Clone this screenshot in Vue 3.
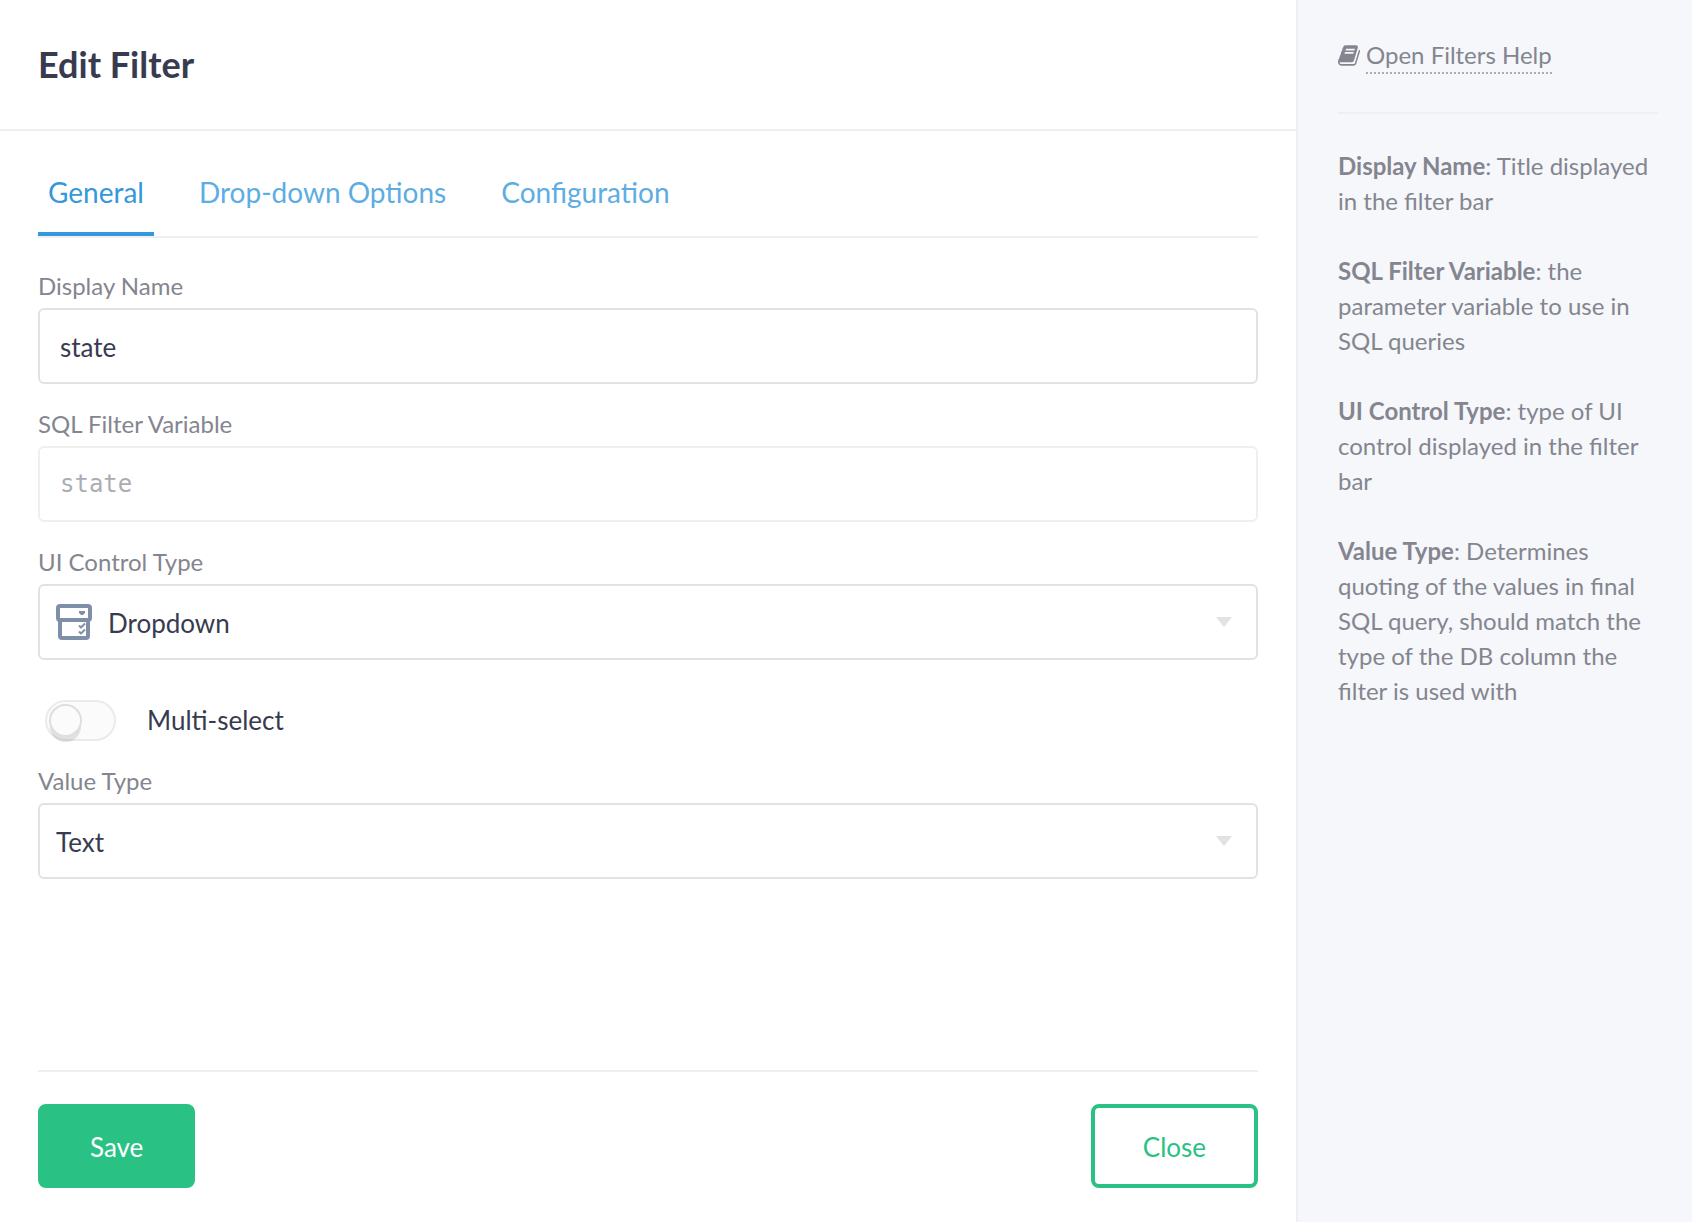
<script setup>
import { ref } from 'vue'

const tabs = ['General', 'Drop-down Options', 'Configuration']
const activeTab = ref('General')
const displayName = ref('state')
const variable = ref('state')
const controlType = ref('Dropdown')
const multiSelect = ref(false)
const valueType = ref('Text')

const help = [
  { term: 'Display Name', text: 'Title displayed in the filter bar' },
  { term: 'SQL Filter Variable', text: 'the parameter variable to use in SQL queries' },
  { term: 'UI Control Type', text: 'type of UI control displayed in the filter bar' },
  {
    term: 'Value Type',
    text: 'Determines quoting of the values in final SQL query, should match the type of the DB column the filter is used with',
  },
]
</script>

<template>
  <div class="dialog">
    <main class="main">
      <header class="header">
        <h1>Edit Filter</h1>
      </header>

      <form class="body" @submit.prevent>
        <nav class="tabs">
          <a
            v-for="tab in tabs"
            :key="tab"
            href="#"
            class="tab"
            :class="{ active: tab === activeTab }"
            @click.prevent="activeTab = tab"
          >{{ tab }}</a>
        </nav>

        <div class="field">
          <label for="display-name">Display Name</label>
          <input id="display-name" v-model="displayName" class="control" type="text" />
        </div>

        <div class="field">
          <label for="variable">SQL Filter Variable</label>
          <input id="variable" v-model="variable" class="control mono" type="text" disabled />
        </div>

        <div class="field">
          <label for="control-type">UI Control Type</label>
          <div class="select-wrap">
            <select id="control-type" v-model="controlType" class="control with-icon">
              <option>Dropdown</option>
            </select>
            <svg class="type-icon" viewBox="0 0 36 36" aria-hidden="true">
              <g fill="none" stroke="#7f8fa9" stroke-linejoin="round">
                <rect x="2" y="2" width="32" height="14" rx="2" stroke-width="4" />
                <path d="M4 16v16a2 2 0 0 0 2 2h24a2 2 0 0 0 2-2V16" stroke-width="4" />
                <path d="M23 21.500l2 2 4-4M23 27.500l2 2 4-4" stroke-width="2" />
              </g>
              <path d="M23 7h6v2l-2 2h-2l-2-2z" fill="#7f8fa9" />
            </svg>
            <svg class="caret" viewBox="0 0 16 10" aria-hidden="true"><path d="M0 0h16L8 10z" fill="#e2e2e2" /></svg>
          </div>
        </div>

        <label class="toggle">
          <input v-model="multiSelect" type="checkbox" />
          <span class="track"><span class="knob"></span></span>
          <span class="toggle-text">Multi-select</span>
        </label>

        <div class="field">
          <label for="value-type">Value Type</label>
          <div class="select-wrap">
            <select id="value-type" v-model="valueType" class="control">
              <option>Text</option>
            </select>
            <svg class="caret" viewBox="0 0 16 10" aria-hidden="true"><path d="M0 0h16L8 10z" fill="#e2e2e2" /></svg>
          </div>
        </div>

        <footer class="footer">
          <button type="submit" class="btn primary">Save</button>
          <button type="button" class="btn">Close</button>
        </footer>
      </form>
    </main>

    <aside class="help">
      <div class="help-link">
        <svg viewBox="0 0 1664 1536" aria-hidden="true">
          <path
            fill="#84858f"
            d="M1639 350q40 57 18 129l-275 906q-19 64-76.500 107.500T1183 1536H260q-77 0-148.500-53.500T12 1351q-24-67-2-127 0-4 3-27t4-37q1-8-3-21.500t-3-19.500q2-11 8-21t16.500-23.500T52 1051q23-38 45-91.500t30-91.500q3-10 .5-30t-.5-28q3-11 17-28t17-23q21-36 42-92t25-90q1-9-2.500-32t.5-28q4-13 22-30.500t22-22.500q19-26 42.500-84.500T340 283q1-8-3-25.500t-2-26.500q2-8 9-18t18-23 17-21q8-12 16.500-30.500t15-35 16-36T446 35t26.500-23.500T509 0t47 5.500l-1 3q38-9 51-9h761q74 0 114 56t18 130l-274 906q-36 119-71.500 153.500T1025 1280H156q-27 0-38 15-11 16-1 43 24 70 144 70h923q29 0 56-15.500t35-41.500l300-987q7-22 5-57 38 15 59 43zm-1064 2q-4 13 2 22.500t20 9.500h608q13 0 25.500-9.500T1247 352l21-64q4-13-2-22.500t-20-9.500H638q-13 0-25.500 9.500T596 288zm-83 256q-4 13 2 22.500t20 9.500h608q13 0 25.500-9.500T1164 608l21-64q4-13-2-22.500t-20-9.500H555q-13 0-25.500 9.500T513 544z"
          />
        </svg>
        <a href="#" @click.prevent>Open Filters Help</a>
      </div>
      <p v-for="item in help" :key="item.term"><strong>{{ item.term }}</strong>: {{ item.text }}</p>
    </aside>
  </div>
</template>

<style>
body {
  background: #fff;
}
</style>

<style scoped>
* {
  box-sizing: border-box;
}
.dialog {
  display: flex;
  min-height: 100vh;
  font-family: Lato, sans-serif;
  font-size: 26px;
  color: #383b50;
}
.main {
  flex: 1;
  min-width: 0;
  display: flex;
  flex-direction: column;
}
.header {
  padding: 39px 38px 40px;
  border-bottom: 2px solid #efefef;
}
h1 {
  margin: 0;
  font-size: 36px;
  line-height: 50px;
  font-weight: 700;
}
.body {
  flex: 1;
  display: flex;
  flex-direction: column;
  padding: 27px 38px 34px;
}
.tabs {
  display: flex;
  gap: 35px;
  border-bottom: 2px solid #efefef;
}
.tab {
  padding: 14px 10px 20px;
  border-bottom: 4px solid transparent;
  font-size: 28px;
  line-height: 40px;
  color: #5dade2;
  text-decoration: none;
}
.tab.active {
  color: #3498db;
  border-color: #3498db;
}
.field {
  margin-top: 24px;
}
.tabs + .field {
  margin-top: 32px;
}
.field > label {
  display: block;
  margin-bottom: 6px;
  font-size: 24px;
  line-height: 32px;
  color: #84858f;
}
.control {
  display: block;
  width: 100%;
  height: 76px;
  padding: 2px 20px 0;
  border: 2px solid #e2e2e2;
  border-radius: 6px;
  background: transparent;
  font: inherit;
  color: inherit;
  outline: none;
}
.control.mono {
  padding-top: 0;
  font-family: "DejaVu Sans Mono", monospace;
  font-size: 24px;
  color: #acadb3;
  border-color: #efefef;
}
.select-wrap {
  position: relative;
}
select.control {
  appearance: none;
  padding: 2px 60px 0 16px;
}
select.with-icon {
  padding-left: 68px;
}
.type-icon {
  position: absolute;
  left: 18px;
  top: 20px;
  width: 36px;
  height: 36px;
  pointer-events: none;
}
.caret {
  position: absolute;
  right: 26px;
  top: 33px;
  width: 16px;
  height: 10px;
  pointer-events: none;
}
.toggle {
  position: relative;
  align-self: flex-start;
  display: flex;
  align-items: center;
  gap: 31px;
  margin: 40px 0 0 7px;
}
.toggle-text {
  line-height: 32px;
  padding-bottom: 2px;
}
.toggle input {
  position: absolute;
  inset: 0;
  margin: 0;
  opacity: 0;
}
.toggle + .field {
  margin-top: 24px;
}
.track {
  width: 71px;
  height: 41px;
  padding: 2px;
  border: 2px solid #ebebeb;
  border-radius: 21px;
  background: #fbfbfb;
}
.knob {
  display: block;
  width: 33px;
  height: 33px;
  border: 2px solid #dedede;
  border-radius: 50%;
  background: #fbfbfb;
  box-shadow: 0 6px 0 -1px rgba(0, 0, 0, 0.1);
}
.toggle input:checked + .track {
  background: #2ac185;
}
.toggle input:checked + .track .knob {
  margin-left: auto;
}
.footer {
  display: flex;
  justify-content: space-between;
  margin-top: auto;
  padding-top: 32px;
  border-top: 2px solid #efefef;
}
.btn {
  height: 84px;
  padding: 2px 48px 0;
  border: 4px solid #2ac185;
  border-radius: 8px;
  background: #fff;
  color: #2ac185;
  font: inherit;
}
.btn.primary {
  background: #2ac185;
  color: #fff;
}
.help {
  flex: none;
  width: 396px;
  padding: 37px 34px 38px 40px;
  border-left: 2px solid #efefef;
  background: #f5f7fb;
  font-size: 24px;
  line-height: 35px;
  color: #84858f;
}
.help-link {
  display: flex;
  align-items: flex-start;
  gap: 6px;
  padding-bottom: 38px;
  margin-bottom: 34px;
  border-bottom: 2px solid #efefef;
}
.help-link svg {
  width: 22px;
  height: 21px;
  margin-top: 8px;
}
.help-link a {
  height: 37px;
  border-bottom: 2px dotted #a9aab2;
  color: inherit;
  text-decoration: none;
}
.help p {
  margin: 0 0 35px;
}
</style>
